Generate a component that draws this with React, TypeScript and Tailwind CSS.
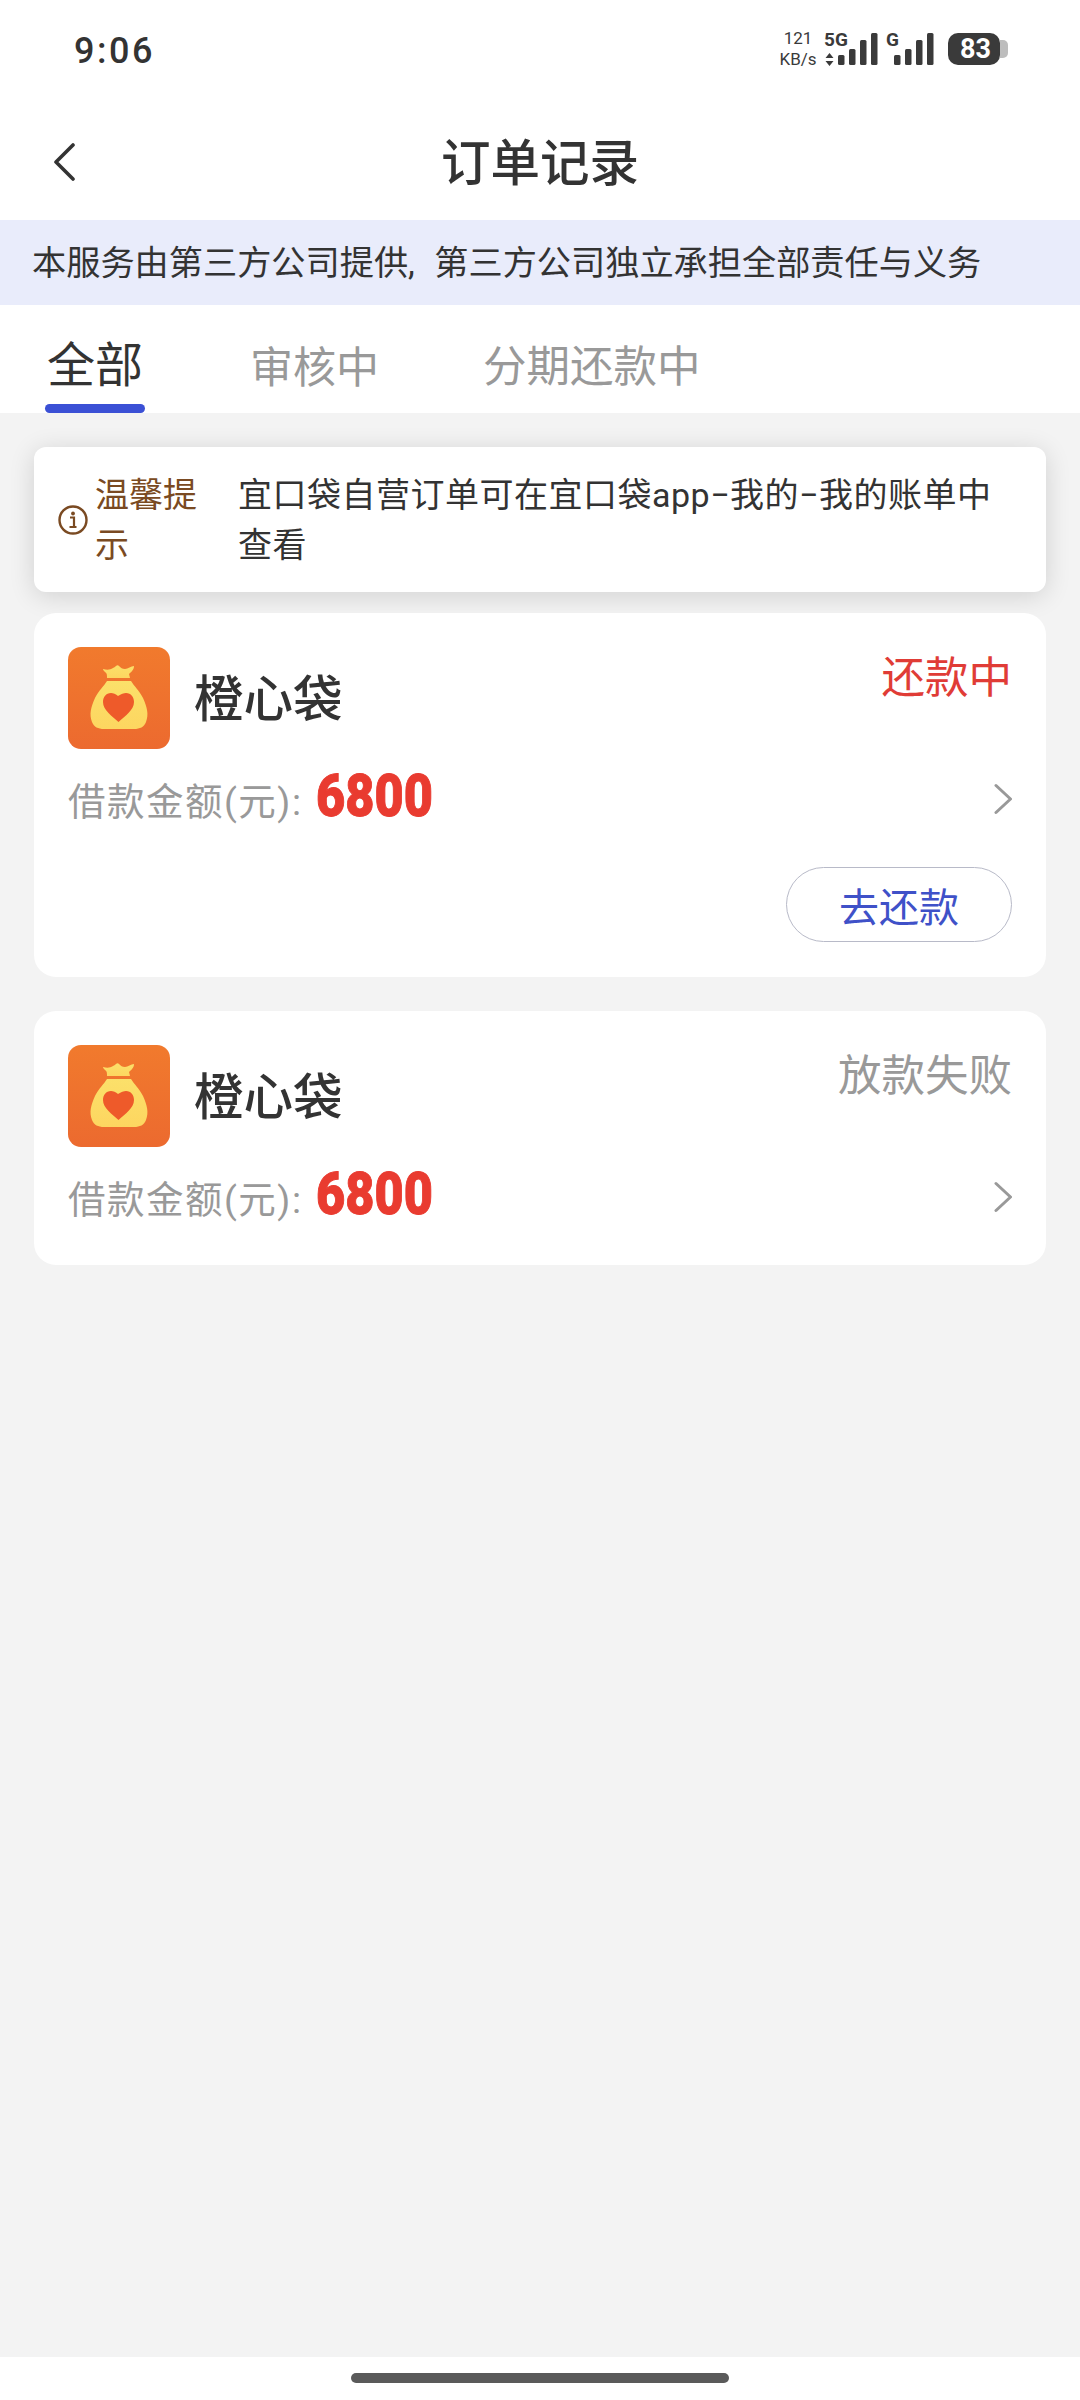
const FONT = "font-['Roboto','Noto_Sans_CJK_SC',sans-serif]";

const SignalBars = ({ x = 0 }: { x?: number }) => (
  <g transform={`translate(${x} 0)`} fill="#3a3a3a">
    <rect x="0" y="22" width="6.5" height="10" rx="1.5" />
    <rect x="11" y="16" width="6.5" height="16" rx="1.5" />
    <rect x="22" y="7" width="6.5" height="25" rx="1.5" />
    <rect x="33" y="0" width="6.5" height="32" rx="1.5" />
  </g>
);

const StatusBar = () => (
  <div className="h-[90px] flex items-start justify-between pl-[74px] pr-[72px]">
    <span className="mt-[27px] text-[36px] leading-[48px] font-medium tracking-[2.5px] text-[#333]">9:06</span>
    <div className="flex items-start mt-[31px]">
      <div className="flex flex-col items-center w-[40px] -mt-[3px] text-[#3a3a3a] text-[17px] leading-[21px] mr-[6px]">
        <span>121</span>
        <span className="whitespace-nowrap">KB/s</span>
      </div>
      <div className="relative w-[54px] h-[34px]">
        <span className="absolute left-0 -top-[1px] text-[19px] leading-[19px] font-bold text-[#3a3a3a]">5G</span>
        <svg className="absolute left-0 top-[2px]" width="56" height="34" viewBox="0 0 56 34">
          <path d="M5.500 20l4 5h-8zM5.500 33l-4-5h8z" fill="#3a3a3a" />
          <SignalBars x={14} />
        </svg>
      </div>
      <div className="relative w-[48px] h-[34px] ml-[8px]">
        <span className="absolute left-0 -top-[1px] text-[19px] leading-[19px] font-bold text-[#3a3a3a]">G</span>
        <svg className="absolute left-0 top-[2px]" width="49" height="34" viewBox="0 0 49 34">
          <SignalBars x={8} />
        </svg>
      </div>
      <div className="flex items-center ml-[14px] mt-[2px]">
        <div className="w-[52px] h-[32px] rounded-[10px] bg-[#3a3a3a] text-white text-[27px] leading-[32px] font-bold text-center pl-[3px]">83</div>
        <div className="w-[8px] h-[18px] rounded-r-[5px] bg-[#bdbdbd]" />
      </div>
    </div>
  </div>
);

const Header = () => (
  <div className="relative h-[130px] flex items-center justify-center">
    <svg className="absolute left-[52px] top-[53px]" width="24" height="38" viewBox="0 0 24 38" fill="none">
      <path d="M21 2L4 19l17 17" stroke="#333" strokeWidth="3.6" strokeLinecap="round" strokeLinejoin="round" />
    </svg>
    <span className="text-[49.500px] leading-[60px] font-medium text-[#333] mt-[17px]">订单记录</span>
  </div>
);

const Tabs = () => (
  <div className="relative h-[108px] flex items-start pl-[47px]">
    <div className="relative w-[98px]">
      <span className="block mt-[31px] text-[48px] leading-[60px] text-[#333]">全部</span>
      <div className="absolute left-[-2px] top-[99px] w-[100px] h-[9px] rounded-[5px] bg-[#3b50d5]" />
    </div>
    <span className="ml-[105px] mt-[35px] text-[43px] leading-[56px] text-[#999]">审核中</span>
    <span className="ml-[104px] mt-[35px] text-[43.500px] leading-[56px] text-[#999]">分期还款中</span>
  </div>
);

const BagIcon = ({ id }: { id: string }) => (
  <svg className="shrink-0" width="102" height="102" viewBox="0 0 102 102">
    <defs>
      <linearGradient id={`${id}-bg`} x1="0" y1="0" x2="0" y2="1">
        <stop offset="0" stopColor="#f17a2d" />
        <stop offset="1" stopColor="#ec6a2f" />
      </linearGradient>
      <linearGradient id={`${id}-bag`} x1="0" y1="0" x2="0" y2="1">
        <stop offset="0" stopColor="#fbe06a" />
        <stop offset="1" stopColor="#fdd660" />
      </linearGradient>
    </defs>
    <rect width="102" height="102" rx="13" fill={`url(#${id}-bg)`} />
    <path d="M35 22c4 1 7 1 10-1 3-1 4-4 6-2 2 2 3 3 6 3 3 0 6-3 9-3 0 4-3 6-5 8l1 4H39c0-3 0-5-2-6-1-1-2-2-2-3z" fill={`url(#${id}-bag)`} />
    <path d="M39 34h24c3 5 8 9 12 17 4 9 6 16 3 24-2 5-6 7-12 7H36c-6 0-10-2-12-7-3-8-1-15 3-24 4-8 9-12 12-17z" fill={`url(#${id}-bag)`} />
    <path d="M50 49c3-2 6-3 8-3 5 0 8 4 8 9 0 8-9 14-15.500 20C44 69 35 63 35 55c0-5 3-9 8-9 2 0 5 1 7 3z" fill="#ee5a2a" />
  </svg>
);

const Chevron = () => (
  <svg width="20" height="32" viewBox="0 0 20 32" fill="none">
    <path d="M4 2.500L18.500 16 4 29.500" stroke="#999" strokeWidth="3" strokeLinecap="round" strokeLinejoin="round" />
  </svg>
);

const OrderCard = ({ id, status, statusColor, action }: { id: string; status: string; statusColor: string; action?: string }) => (
  <div className={`bg-white rounded-[22px] px-[34px] pt-[34px] ${action ? "pb-[35px]" : "pb-[40px]"}`}>
    <div className="flex items-start justify-between">
      <div className="flex items-center">
        <BagIcon id={id} />
        <span className="ml-[24px] mt-[4px] text-[49.500px] leading-[60px] font-medium text-[#333]">橙心袋</span>
      </div>
      <span className={`mt-[4px] text-[43.500px] leading-[56px] ${statusColor}`}>{status}</span>
    </div>
    <div className="flex items-center justify-between mt-[22px] h-[56px]">
      <div className="flex items-center">
        <span className="mt-[6px] text-[37.500px] leading-[56px] tracking-[1.5px] text-[#999]">借款金额(元):</span>
        <span className="ml-[14px] text-[60px] leading-[56px] font-black text-[#e93b30] origin-left scale-x-[0.84] font-['Roboto'] -mt-[6px] [-webkit-text-stroke:1px_#e93b30]">6800</span>
      </div>
      <Chevron />
    </div>
    {action && (
      <div className="flex justify-end mt-[40px]">
        <div className="w-[226px] h-[75px] pt-[8px] rounded-full border-[1.5px] border-[#b8bac8] flex items-center justify-center text-[40px] text-[#3f51c8]">
          {action}
        </div>
      </div>
    )}
  </div>
);

export default function App() {
  return (
    <div className={`w-[1080px] h-[2400px] bg-white flex flex-col ${FONT}`}>
      <StatusBar />
      <Header />
      <div className="h-[85px] bg-[#e9ecfb] flex items-center pl-[32px] pt-[2px] text-[34.200px] [word-spacing:11px] text-[#333] whitespace-nowrap">
        本服务由第三方公司提供, 第三方公司独立承担全部责任与义务
      </div>
      <Tabs />
      <div className="flex-1 bg-[#f3f3f3] px-[34px] pt-[34px]">
        <div className="relative h-[145px] bg-white rounded-[12px] shadow-[0_4px_26px_rgba(0,0,0,0.14)] flex items-center pl-[24px]">
          <svg className="shrink-0" width="30" height="30" viewBox="0 0 30 30" fill="none">
            <circle cx="15" cy="15" r="13.500" stroke="#7a4a22" strokeWidth="2.400" />
            <circle cx="15" cy="8.500" r="1.900" fill="#7a4a22" />
            <path d="M12 12.500h4v9M11.500 22h7" stroke="#7a4a22" strokeWidth="2.200" />
          </svg>
          <div className="ml-[7px] w-[143px] shrink-0 text-[34px] leading-[50px] text-[#7a4a22]">
            <div className="w-[104px]">温馨提示</div>
          </div>
          <div className="w-[760px] text-[34px] leading-[50px] tracking-[0.5px] text-[#333]">
            宜口袋自营订单可在宜口袋app−我的−我的账单中查看
          </div>
        </div>
        <div className="relative flex flex-col gap-[34px] mt-[21px]">
          <OrderCard id="a" status="还款中" statusColor="text-[#e03c36]" action="去还款" />
          <OrderCard id="b" status="放款失败" statusColor="text-[#999]" />
        </div>
      </div>
      <div className="h-[43px] flex items-start justify-center pt-[16px]">
        <div className="w-[378px] h-[10px] rounded-full bg-[#5a5a5a]" />
      </div>
    </div>
  );
}
